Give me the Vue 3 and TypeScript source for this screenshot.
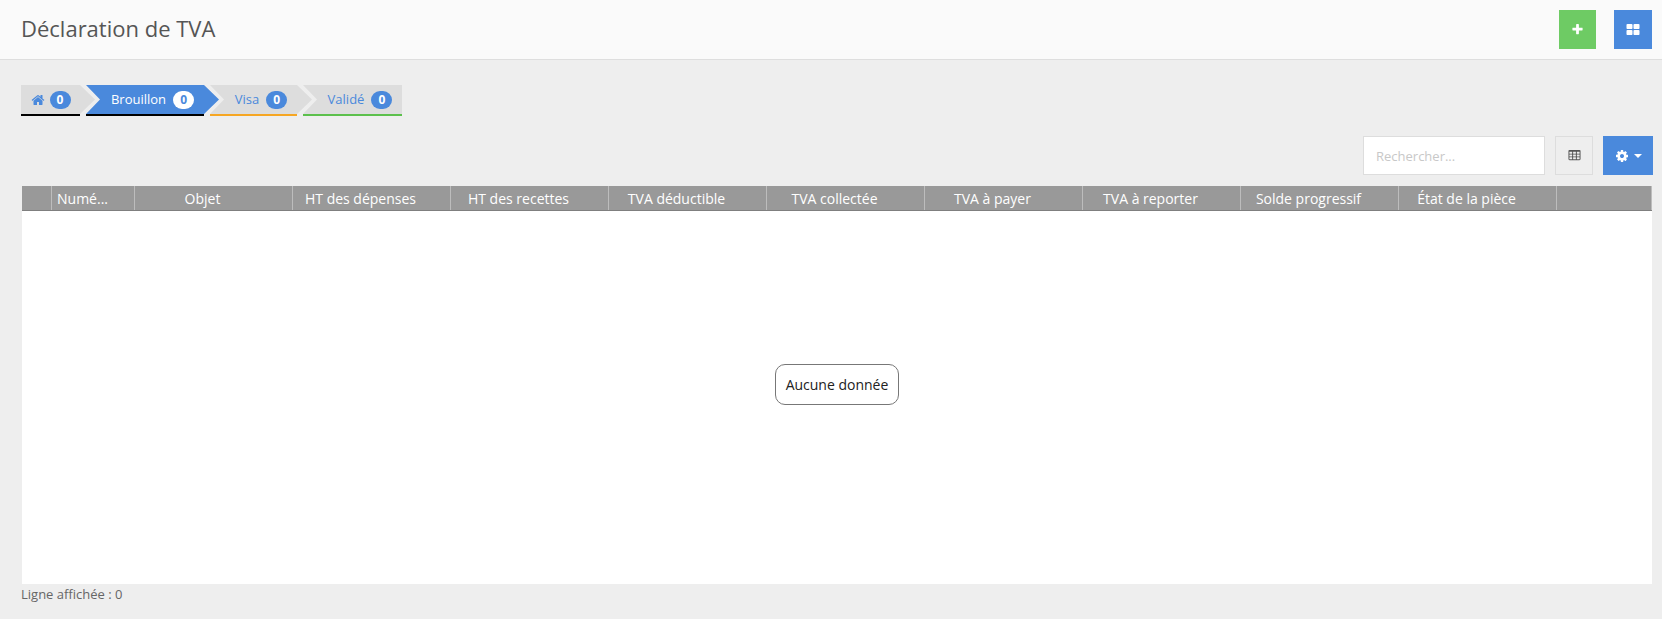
<script setup lang="ts">
interface Tab { label: string; cls: string; home?: boolean }
const tabs: Tab[] = [
  { label: '', cls: 'home', home: true },
  { label: 'Brouillon', cls: 'active' },
  { label: 'Visa', cls: 'visa' },
  { label: 'Validé', cls: 'valid' },
]
interface Col { label: string; w: number; align?: string }
const cols: Col[] = [
  { label: '', w: 30 },
  { label: 'Numé...', w: 83, align: 'left' },
  { label: 'Objet', w: 158 },
  { label: 'HT des dépenses', w: 158 },
  { label: 'HT des recettes', w: 158 },
  { label: 'TVA déductible', w: 158 },
  { label: 'TVA collectée', w: 158 },
  { label: 'TVA à payer', w: 158 },
  { label: 'TVA à reporter', w: 158 },
  { label: 'Solde progressif', w: 158 },
  { label: 'État de la pièce', w: 158 },
]
</script>

<template>
  <div class="page">
    <header class="topbar">
      <h1 class="title">Déclaration de TVA</h1>
      <div class="top-actions">
        <button class="btn-top green" type="button">
          <svg class="ico-plus" viewBox="0 0 1792 1792"><path d="M1600 736v192q0 40-28 68t-68 28h-416v416q0 40-28 68t-68 28h-192q-40 0-68-28t-28-68v-416h-416q-40 0-68-28t-28-68v-192q0-40 28-68t68-28h416v-416q0-40 28-68t68-28h192q40 0 68 28t28 68v416h416q40 0 68 28t28 68z" /></svg>
        </button>
        <button class="btn-top blue" type="button">
          <svg class="ico-large" viewBox="0 0 1792 1792"><path d="M832 1024v384q0 52-38 90t-90 38h-512q-52 0-90-38t-38-90v-384q0-52 38-90t90-38h512q52 0 90 38t38 90zm0-768v384q0 52-38 90t-90 38h-512q-52 0-90-38t-38-90v-384q0-52 38-90t90-38h512q52 0 90 38t38 90zm896 768v384q0 52-38 90t-90 38h-512q-52 0-90-38t-38-90v-384q0-52 38-90t90-38h512q52 0 90 38t38 90zm0-768v384q0 52-38 90t-90 38h-512q-52 0-90-38t-38-90v-384q0-52 38-90t90-38h512q52 0 90 38t38 90z" /></svg>
        </button>
      </div>
    </header>

    <main class="content">
      <nav class="tabs">
        <div v-for="t in tabs" :key="t.cls" class="tab" :class="t.cls">
          <div class="shape">
            <svg v-if="t.home" class="ico-home" viewBox="0 0 1792 1792"><path d="M1472 992v480q0 26-19 45t-45 19h-384v-384h-256v384h-384q-26 0-45-19t-19-45v-480q0-1 .5-3t.5-3l575-474 575 474q1 2 1 6zm223-69l-62 74q-8 9-21 11h-3q-13 0-21-7l-692-577-692 577q-12 8-24 7-13-2-21-11l-62-74q-8-10-7-23.5t11-21.5l719-599q32-26 76-26t76 26l244 204v-195q0-14 9-23t23-9h192q14 0 23 9t9 23v408l219 182q10 8 11 21.5t-7 23.5z" /></svg>
            <span v-else class="label">{{ t.label }}</span>
            <span class="badge">0</span>
          </div>
          <div class="line"></div>
        </div>
      </nav>

      <div class="toolbar">
        <input class="search" type="text" placeholder="Rechercher..." />
        <button class="btn-table" type="button">
          <svg class="ico-table" viewBox="0 0 1792 1792"><path d="M576 1376v-192q0-14-9-23t-23-9h-320q-14 0-23 9t-9 23v192q0 14 9 23t23 9h320q14 0 23-9t9-23zm0-384v-193q0-14-9-23t-23-9h-320q-14 0-23 9t-9 23v193q0 14 9 23t23 9h320q14 0 23-9t9-23zm512 384v-192q0-14-9-23t-23-9h-320q-14 0-23 9t-9 23v192q0 14 9 23t23 9h320q14 0 23-9t9-23zm-512-768v-192q0-14-9-23t-23-9h-320q-14 0-23 9t-9 23v192q0 14 9 23t23 9h320q14 0 23-9t9-23zm512 384v-193q0-14-9-23t-23-9h-320q-14 0-23 9t-9 23v193q0 14 9 23t23 9h320q14 0 23-9t9-23zm512 384v-192q0-14-9-23t-23-9h-320q-14 0-23 9t-9 23v192q0 14 9 23t23 9h320q14 0 23-9t9-23zm-512-768v-192q0-14-9-23t-23-9h-320q-14 0-23 9t-9 23v192q0 14 9 23t23 9h320q14 0 23-9t9-23zm512 384v-193q0-14-9-23t-23-9h-320q-14 0-23 9t-9 23v193q0 14 9 23t23 9h320q14 0 23-9t9-23zm0-384v-192q0-14-9-23t-23-9h-320q-14 0-23 9t-9 23v192q0 14 9 23t23 9h320q14 0 23-9t9-23zm128-320v1088q0 66-47 113t-113 47h-1344q-66 0-113-47t-47-113v-1088q0-66 47-113t113-47h1344q66 0 113 47t47 113z" /></svg>
        </button>
        <button class="btn-gear" type="button">
          <svg class="ico-gear" viewBox="0 0 1792 1792"><path d="M1152 896q0-106-75-181t-181-75-181 75-75 181 75 181 181 75 181-75 75-181zm512-109v222q0 12-8 23t-20 13l-185 28q-19 54-39 91 35 50 107 138 10 12 10 25t-9 23q-27 37-99 108t-94 71q-12 0-26-9l-138-108q-44 23-91 38-16 136-29 186-7 28-36 28h-222q-14 0-24.5-8.5t-11.5-21.5l-28-184q-49-16-90-37l-141 107q-10 9-25 9-14 0-25-11-126-114-165-168-7-10-7-23 0-12 8-23 15-21 51-66.5t54-70.5q-27-50-41-99l-183-27q-13-2-21-12.5t-8-23.5v-222q0-12 8-23t19-13l186-28q14-46 39-92-40-57-107-138-10-12-10-24 0-10 9-23 26-36 98.5-107.5t94.5-71.5q13 0 26 10l138 107q44-23 91-38 16-136 29-186 7-28 36-28h222q14 0 24.5 8.5t11.5 21.5l28 184q49 16 90 37l142-107q9-9 24-9 13 0 25 10 129 119 165 170 7 8 7 22 0 12-8 23-15 21-51 66.5t-54 70.5q26 50 41 98l183 28q13 2 21 12.5t8 23.5z" /></svg>
          <span class="caret"></span>
        </button>
      </div>

      <section class="grid">
        <div class="grid-head">
          <div
            v-for="(c, i) in cols"
            :key="i"
            class="cell"
            :class="c.align"
            :style="{ width: c.w + 'px' }"
          >{{ c.label }}</div>
          <div class="cell filler"></div>
        </div>
        <div class="grid-body">
          <div class="empty">Aucune donnée</div>
        </div>
      </section>

      <p class="count">Ligne affichée : 0</p>
    </main>
  </div>
</template>

<style>
html, body { margin: 0; background: #eeeeee; }
</style>

<style scoped>
.page {
  width: 1662px;
  height: 619px;
  overflow: hidden;
  background: #eeeeee;
  font-family: "Open Sans", "Liberation Sans", sans-serif;
  font-size: 13px;
  color: #555;
}
.topbar {
  height: 59px;
  box-sizing: content-box;
  display: flex;
  align-items: center;
  justify-content: space-between;
  background: #fafafa;
  border-bottom: 1px solid #dedede;
  padding: 0 10px 0 21px;
}
.title {
  margin: 0 0 3px;
  font-size: 22px;
  font-weight: 400;
  color: #555;
}
.top-actions { display: flex; gap: 18px; }
button {
  border: 0;
  padding: 0;
  display: flex;
  align-items: center;
  justify-content: center;
  color: #fff;
}
svg { fill: currentColor; display: block; }
.btn-top { height: 39px; }
.green { width: 37px; background: #6ecb64; }
.blue { width: 38px; background: #4a89dc; }
.ico-plus { width: 13px; height: 13px; }
.ico-large { width: 14px; height: 14px; }
.ico-gear { width: 14px; height: 14px; }
.ico-table { width: 13px; height: 13px; color: #555; }
.content { padding: 25px 9px 0 21px; }
.tabs { display: flex; height: 31px; }
.tab { display: flex; flex-direction: column; margin-right: -9px; }
.shape {
  height: 29px;
  display: flex;
  align-items: center;
  justify-content: center;
  gap: 7px;
  background: #dddddd;
  color: #4a89dc;
  box-sizing: border-box;
}
.line { height: 2px; background: #000; margin-right: 15px; }
.home { width: 74px; }
.home .shape {
  padding-right: 15px;
  gap: 5px;
  clip-path: polygon(0 0, 59px 0, 100% 50%, 59px 100%, 0 100%);
}
.active { width: 133px; }
.active .shape {
  background: #4a89dc;
  color: #fff;
  clip-path: polygon(0 0, 118px 0, 100% 50%, 118px 100%, 0 100%, 14px 50%);
}
.active .badge { background: #fff; color: #4a89dc; }
.visa { width: 102px; }
.visa .shape {
  clip-path: polygon(0 0, 87px 0, 100% 50%, 87px 100%, 0 100%, 14px 50%);
}
.visa .line { background: #f6a623; }
.valid { width: 99px; margin-right: 0; }
.valid .shape {
  padding-left: 15px;
  clip-path: polygon(0 0, 100% 0, 100% 100%, 0 100%, 14px 50%);
}
.valid .line { background: #5cc04c; margin-right: 0; }
.ico-home { width: 14px; height: 14px; }
.label { font-size: 13px; margin-top: -2px; }
.badge {
  min-width: 21px;
  height: 18px;
  line-height: 18px;
  border-radius: 10px;
  background: #4a89dc;
  color: #fff;
  font-size: 12px;
  font-weight: 700;
  text-align: center;
}
.toolbar {
  display: flex;
  justify-content: flex-end;
  align-items: stretch;
  gap: 10px;
  height: 39px;
  margin: 20px 0 11px;
}
.search {
  width: 182px;
  box-sizing: border-box;
  border: 1px solid #dddddd;
  background: #fff;
  padding: 0 12px;
  font-family: inherit;
  font-size: 13px;
  outline: none;
}
.search::placeholder { color: #c8c8c8; opacity: 1; }
.btn-table {
  width: 38px;
  box-sizing: border-box;
  background: #eeeeee;
  border: 1px solid #dddddd;
}
.btn-gear {
  width: 50px;
  gap: 5px;
  background: #4a89dc;
}
.caret {
  width: 0;
  height: 0;
  border-left: 4px solid transparent;
  border-right: 4px solid transparent;
  border-top: 4px solid #fff;
}
.grid { width: 1630px; margin-left: 1px; }
.grid-head {
  display: flex;
  height: 24px;
  background: #999999;
  border-bottom: 1px solid #7f7f7f;
  color: #fff;
  font-size: 14px;
}
.cell {
  box-sizing: border-box;
  flex: none;
  line-height: 26px;
  text-align: center;
  white-space: nowrap;
  overflow: hidden;
  border-right: 1px solid #bdbdbd;
  padding-right: 22px;
}
.cell.left { text-align: left; padding-left: 5px; padding-right: 0; }
.cell.filler { flex: 1; padding: 0; }
.grid-body {
  height: 373px;
  box-sizing: border-box;
  padding-bottom: 26px;
  background: #fff;
  display: flex;
  align-items: center;
  justify-content: center;
}
.empty {
  border: 1px solid #777;
  border-radius: 10px;
  padding: 10px;
  background: #fff;
  color: #222;
  font-size: 14px;
  line-height: 19px;
}
.count { margin: 1px 0 0; font-size: 13px; line-height: 18px; color: #666; }
</style>
